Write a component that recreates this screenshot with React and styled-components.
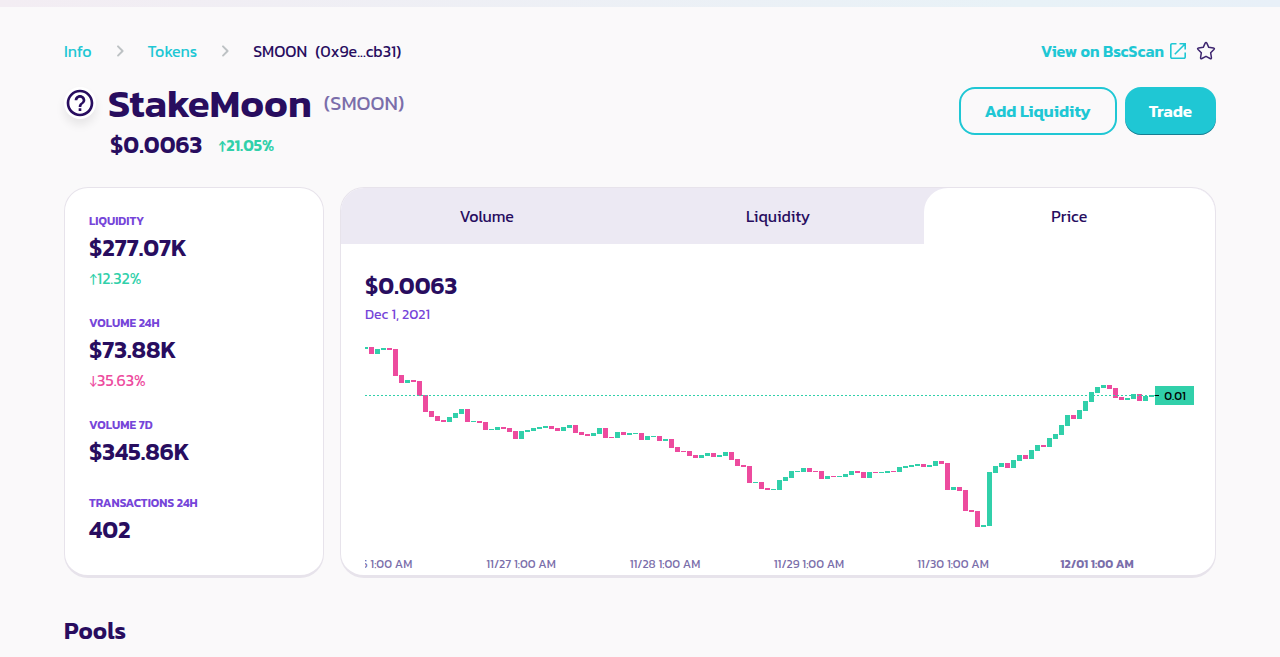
import React, { useState } from 'react';
import styled, { createGlobalStyle, css } from 'styled-components';

const colors = {
  text: '#280d5f',
  subtle: '#7a6eaa',
  primary: '#1fc7d4',
  secondary: '#7645d9',
  success: '#31d0aa',
  failure: '#ed4b9e',
  border: '#e7e3eb',
  tabs: '#ece9f3',
  disabled: '#bdc2c4',
};

const GlobalStyle = createGlobalStyle`
  * {
    box-sizing: border-box;
  }

  body {
    margin: 0;
    background: #faf9fa;
    color: ${colors.text};
    font-family: Kanit, Roboto, sans-serif;
    font-size: 16px;
    line-height: 24px;
  }
`;

const TopBar = styled.div`
  height: 7px;
  background: linear-gradient(90deg, #f3edf3 0%, #e8f2f7 80%, #e8f0f8 100%);
`;

const Page = styled.main`
  max-width: 1200px;
  margin: 0 auto;
  padding: 32px 24px;
`;

const Row = styled.div`
  display: flex;
  flex-wrap: wrap;
  align-items: flex-start;
  justify-content: space-between;
  gap: 8px;
  margin-bottom: 24px;
`;

const Breadcrumbs = styled.nav`
  display: flex;
  align-items: center;
  gap: 16px;

  a {
    color: ${colors.primary};
    text-decoration: none;
  }

  svg {
    fill: ${colors.disabled};
  }
`;

const Current = styled.span`
  display: flex;
  gap: 8px;
`;

const Links = styled.div`
  display: flex;
  align-items: center;
  gap: 8px;
`;

const ScanLink = styled.a`
  display: flex;
  align-items: center;
  gap: 4px;
  color: ${colors.primary};
  font-weight: 600;
  text-decoration: none;
`;

const StarButton = styled.button`
  display: flex;
  padding: 0;
  border: 0;
  background: none;
  color: ${colors.text};
  cursor: pointer;
`;

const TokenLogo = styled.svg`
  flex: none;
  border-radius: 50%;
  background: #fff;
  fill: ${colors.text};
  box-shadow: 0 6px 10px rgba(0, 0, 0, 0.08);
`;

const Token = styled.div`
  display: grid;
  grid-template-columns: 32px auto;
  column-gap: 12px;
  row-gap: 8px;
`;

const TokenTitle = styled.div`
  display: flex;
  align-items: center;
  gap: 12px;
  line-height: 32px;
`;

const Name = styled.h1`
  margin: 0;
  font-size: 40px;
  font-weight: 600;
`;

const Symbol = styled.span`
  color: ${colors.subtle};
  font-size: 20px;
`;

const TokenPrice = styled.div`
  grid-column: 2;
  display: flex;
  align-items: center;
  gap: 16px;
  padding-left: 2px;
`;

const Value = styled.div`
  font-size: 24px;
  font-weight: 600;
  line-height: 36px;
`;

const Percent = styled.div`
  color: ${(props) => (props.$down ? colors.failure : colors.success)};
  font-weight: ${(props) => (props.$bold ? 600 : 400)};
`;

const Actions = styled.div`
  display: flex;
  gap: 8px;
`;

const Button = styled.button`
  height: 48px;
  padding: 0 24px;
  border: 0;
  border-radius: 16px;
  background: ${colors.primary};
  box-shadow: inset 0 -1px 0 rgba(14, 14, 44, 0.4);
  color: #fff;
  font: inherit;
  font-size: 17px;
  font-weight: 600;
  cursor: pointer;

  ${(props) => props.$outline && css`
    border: 2px solid ${colors.primary};
    background: transparent;
    box-shadow: none;
    color: ${colors.primary};
  `}
`;

const Content = styled.div`
  display: grid;
  grid-template-columns: 260px minmax(0, 1fr);
  gap: 16px;
  margin-bottom: 40px;
`;

const Card = styled.section`
  border: solid ${colors.border};
  border-width: 1px 1px 3px;
  border-radius: 24px;
  background: #fff;
  overflow: hidden;
`;

const Stats = styled.div`
  display: flex;
  flex-direction: column;
  gap: 24px;
  padding: 24px;
`;

const StatLabel = styled.div`
  color: ${colors.secondary};
  font-size: 12px;
  font-weight: 600;
  line-height: 18px;
  text-transform: uppercase;
`;

const Tabs = styled.div`
  display: flex;
  background: ${colors.tabs};
`;

const Tab = styled.button`
  flex: 1;
  height: 56px;
  border: 0;
  border-radius: 24px 24px 0 0;
  background: ${(props) => (props.$active ? '#fff' : 'transparent')};
  color: ${colors.text};
  font: inherit;
  cursor: pointer;
`;

const ChartPanel = styled.div`
  padding: 24px 20px 0 24px;
`;

const ChartDate = styled.div`
  color: ${colors.secondary};
  font-size: 14px;
  line-height: 21px;
`;

const ChartSvg = styled.svg`
  display: block;
  width: 100%;
  height: 250px;

  text {
    fill: ${colors.subtle};
    font-size: 12px;
    text-anchor: middle;
  }

  .last {
    font-weight: 600;
  }

  .price {
    fill: #000;
  }
`;

const Heading = styled.h2`
  margin: 0;
  font-size: 24px;
  font-weight: 600;
  line-height: 26px;
`;

const stats = [
  { label: 'Liquidity', value: '$277.07K', change: '↑12.32%' },
  { label: 'Volume 24H', value: '$73.88K', change: '↓35.63%', down: true },
  { label: 'Volume 7D', value: '$345.86K' },
  { label: 'Transactions 24H', value: '402' },
];

const tabs = ['Volume', 'Liquidity', 'Price'];

// [top, bottom, rising]
const candles = [
  [22, 24, 1], [22, 29, 0], [24, 29, 1], [23, 25, 1], [23, 25, 0], [24, 51, 0],
  [50, 58, 0], [55, 58, 1], [55, 57, 0], [56, 71, 0], [70, 87, 0], [86, 92, 0],
  [91, 96, 0], [95, 97, 0], [92, 97, 1], [88, 93, 1], [84, 89, 1], [84, 97, 0],
  [96, 97, 1], [96, 98, 0], [97, 105, 0], [104, 105, 1], [102, 105, 1], [102, 104, 0],
  [103, 107, 0], [106, 114, 0], [106, 114, 1], [105, 107, 1], [103, 106, 1], [102, 104, 1],
  [101, 103, 1], [101, 104, 0], [103, 106, 0], [102, 106, 1], [100, 103, 1], [100, 108, 0],
  [107, 110, 0], [109, 111, 0], [108, 111, 1], [103, 109, 1], [103, 113, 0], [112, 113, 0],
  [107, 113, 1], [107, 110, 0], [108, 110, 1], [108, 109, 1], [108, 115, 0], [111, 115, 1],
  [111, 112, 1], [111, 116, 0], [114, 116, 1], [114, 123, 0], [122, 127, 0], [126, 127, 0],
  [126, 131, 0], [130, 133, 0], [130, 133, 1], [128, 131, 1], [128, 132, 0], [130, 132, 1],
  [127, 131, 1], [127, 135, 0], [134, 141, 0], [140, 142, 0], [141, 158, 0], [157, 158, 1],
  [157, 164, 0], [163, 165, 0], [164, 165, 1], [155, 165, 1], [152, 156, 1], [146, 153, 1],
  [146, 147, 1], [143, 147, 1], [143, 147, 0], [146, 147, 0], [146, 154, 0], [151, 154, 1],
  [151, 152, 0], [151, 152, 1], [149, 152, 1], [146, 150, 1], [146, 148, 0], [147, 153, 0],
  [147, 153, 1], [147, 148, 0], [147, 148, 1], [146, 148, 1], [146, 147, 0], [142, 147, 1],
  [141, 143, 1], [140, 142, 1], [139, 141, 1], [139, 142, 0], [140, 142, 1], [136, 141, 1],
  [136, 139, 0], [138, 165, 0], [162, 165, 1], [162, 166, 0], [165, 186, 0], [185, 187, 0],
  [186, 202, 0], [200, 202, 1], [147, 201, 1], [141, 148, 1], [138, 142, 1], [138, 143, 0],
  [135, 143, 1], [130, 136, 1], [130, 134, 0], [125, 134, 1], [120, 126, 1], [120, 122, 0],
  [113, 122, 1], [109, 114, 1], [100, 110, 1], [90, 101, 1], [90, 94, 0], [85, 94, 1],
  [76, 86, 1], [67, 77, 1], [62, 68, 1], [60, 63, 1], [60, 64, 0], [63, 73, 0],
  [72, 75, 0], [73, 75, 1], [69, 74, 1], [69, 76, 0], [71, 76, 1], [70, 72, 1],
];

const dates = [
  '11/26 1:00 AM',
  '11/27 1:00 AM',
  '11/28 1:00 AM',
  '11/29 1:00 AM',
  '11/30 1:00 AM',
  '12/01 1:00 AM',
];

const Chevron = () => (
  <svg width="24" height="24" viewBox="0 0 24 24" aria-hidden="true">
    <path d="M9.3 6.7a1 1 0 0 0 0 1.4l3.9 3.9-3.9 3.9a1 1 0 0 0 1.4 1.4l4.6-4.6a1 1 0 0 0 0-1.4l-4.6-4.6a1 1 0 0 0-1.4 0z" />
  </svg>
);

const PriceChart = () => (
  <ChartSvg viewBox="0 0 830 250" preserveAspectRatio="xMinYMin meet">
    <g shapeRendering="crispEdges">
      {candles.map(([top, bottom, rising], i) => (
        <rect
          key={i}
          x={i * 6 - 2}
          y={top}
          width="5"
          height={bottom - top}
          fill={rising ? colors.success : colors.failure}
        />
      ))}
      <path d="M0 70.5H790" stroke={colors.success} strokeDasharray="2 2" />
      <rect x="790" y="61" width="39" height="19" fill={colors.success} />
      <path d="M790 70.5h4" stroke="#000" />
    </g>
    <text className="price" x="810" y="75">0.01</text>
    {dates.map((date, i) => (
      <text
        key={date}
        className={i === dates.length - 1 ? 'last' : undefined}
        x={12 + i * 144}
        y="243"
      >
        {date}
      </text>
    ))}
  </ChartSvg>
);

const App = () => {
  const [active, setActive] = useState('Price');

  return (
    <>
      <GlobalStyle />
      <TopBar />
      <Page>
        <Row>
          <Breadcrumbs aria-label="Breadcrumb">
            <a href="#info">Info</a>
            <Chevron />
            <a href="#tokens">Tokens</a>
            <Chevron />
            <Current>
              <span>SMOON</span>
              <span>(0x9e...cb31)</span>
            </Current>
          </Breadcrumbs>
          <Links>
            <ScanLink href="#bscscan">
              View on BscScan
              <svg
                width="20"
                height="20"
                viewBox="0 0 20 20"
                fill="none"
                stroke="currentColor"
                strokeWidth="1.6"
                aria-hidden="true"
              >
                <path d="M8.500 2.800H4A1.200 1.200 0 0 0 2.800 4v12A1.200 1.200 0 0 0 4 17.200h12a1.200 1.200 0 0 0 1.200-1.200v-4.500M11.500 2.800h5.700v5.700M17 3L6.800 13.200" />
              </svg>
            </ScanLink>
            <StarButton aria-label="Add to watchlist">
              <svg
                width="20"
                height="20"
                viewBox="0 0 24 24"
                fill="none"
                stroke="currentColor"
                strokeOpacity="0.9"
                strokeWidth="1.8"
                strokeLinejoin="round"
              >
                <path d="M11 2.600q1-1.900 2 0L15.300 7.600L20.900 8.400q2 .4.600 1.900L17.600 14.200L18.500 19.800q.2 2-1.600 1.200L12 18.400L7.100 21q-1.800.8-1.600-1.200L6.400 14.200L2.500 10.300q-1.400-1.500.6-1.900L8.700 7.600z" />
              </svg>
            </StarButton>
          </Links>
        </Row>

        <Row>
          <Token>
            <TokenLogo width="32" height="32" viewBox="0 0 24 24" aria-hidden="true">
              <path d="M11 18h2v-2h-2v2zm1-16C6.480 2 2 6.480 2 12s4.480 10 10 10 10-4.480 10-10S17.520 2 12 2zm0 18c-4.410 0-8-3.590-8-8s3.590-8 8-8 8 3.590 8 8-3.590 8-8 8zm0-14c-2.210 0-4 1.790-4 4h2c0-1.100.9-2 2-2s2 .9 2 2c0 2-3 1.750-3 5h2c0-2.250 3-2.500 3-5 0-2.210-1.790-4-4-4z" />
            </TokenLogo>
            <TokenTitle>
              <Name>StakeMoon</Name>
              <Symbol>(SMOON)</Symbol>
            </TokenTitle>
            <TokenPrice>
              <Value>$0.0063</Value>
              <Percent $bold>↑21.05%</Percent>
            </TokenPrice>
          </Token>
          <Actions>
            <Button $outline>Add Liquidity</Button>
            <Button>Trade</Button>
          </Actions>
        </Row>

        <Content>
          <Card>
            <Stats>
              {stats.map(({ label, value, change, down }) => (
                <div key={label}>
                  <StatLabel>{label}</StatLabel>
                  <Value>{value}</Value>
                  {change && <Percent $down={down}>{change}</Percent>}
                </div>
              ))}
            </Stats>
          </Card>
          <Card>
            <Tabs role="tablist">
              {tabs.map((tab) => (
                <Tab
                  key={tab}
                  role="tab"
                  aria-selected={tab === active}
                  $active={tab === active}
                  onClick={() => setActive(tab)}
                >
                  {tab}
                </Tab>
              ))}
            </Tabs>
            <ChartPanel>
              <Value>$0.0063</Value>
              <ChartDate>Dec 1, 2021</ChartDate>
              <PriceChart />
            </ChartPanel>
          </Card>
        </Content>

        <Heading>Pools</Heading>
      </Page>
    </>
  );
};

export default App;
